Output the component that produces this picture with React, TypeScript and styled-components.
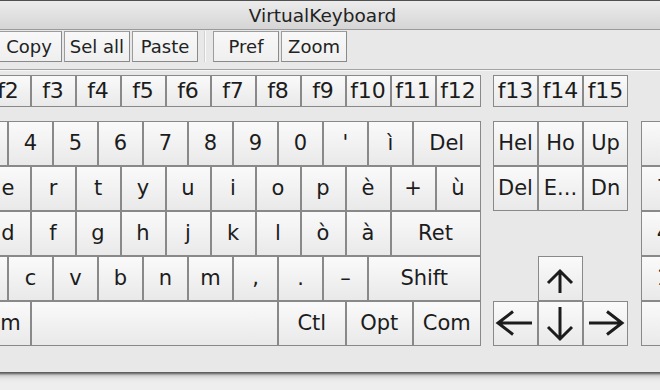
import React from 'react';
import styled, { createGlobalStyle, css } from 'styled-components';

const U = 45;

const Global = createGlobalStyle`
  html, body {
    margin: 0;
    padding: 0;
    overflow: hidden;
    background: #eeeeee;
  }
  body {
    width: 660px;
    height: 390px;
    font-family: 'DejaVu Sans', 'Liberation Sans', sans-serif;
  }
`;

const Window = styled.div`
  margin-left: -190px;
  width: 1025px;
  background: #e8e8e8;
  border-bottom: 1px solid #5e5e5e;
  box-shadow: 0 1px 2px rgba(0, 0, 0, 0.55), 0 3px 6px rgba(0, 0, 0, 0.22);
`;

const TitleBar = styled.div`
  height: 28px;
  border-top: 1px solid #505050;
  border-bottom: 1px solid #9a9a9a;
  background: linear-gradient(#ececec, #d5d5d5);
  display: flex;
  align-items: center;
  justify-content: center;
`;

const Title = styled.span`
  font-size: 18.5px;
  color: #222;
`;

const Toolbar = styled.div`
  height: 38px;
  padding: 1px 0 0 118px;
  display: flex;
  align-items: flex-start;
  gap: 2px;
`;

const ToolButton = styled.div`
  box-sizing: border-box;
  width: 66px;
  height: 31px;
  border: 1px solid #9c9c9c;
  border-right-color: #8a8a8a;
  border-bottom-color: #8a8a8a;
  background: linear-gradient(#f8f8f8, #efefef);
  display: flex;
  align-items: center;
  justify-content: center;
  font-size: 18px;
  color: #222;
  white-space: nowrap;
`;

const ToolSeparator = styled.div`
  width: 1px;
  height: 31px;
  margin: 0 5px;
  background: #fbfbfb;
  box-shadow: -1px 0 0 #d2d2d2;
`;

const Divider = styled.div`
  height: 1px;
  background: #a3a3a3;
  border-bottom: 1px solid #f6f6f6;
`;

const KeyboardArea = styled.div`
  display: flex;
  align-items: flex-start;
  padding: 4px 14px 26px 18px;
`;

const Section = styled.div<{ $gapAfter?: number }>`
  display: flex;
  flex-direction: column;
  gap: 14px;
  flex: none;
  margin-right: ${p => p.$gapAfter ?? 0}px;
`;

const FRow = styled.div<{ $indent?: number }>`
  display: flex;
  height: 32px;
  padding-left: ${p => p.$indent ?? 0}px;
`;

const Row = styled.div`
  display: flex;
  height: ${U}px;
`;

const capStyle = css`
  box-sizing: border-box;
  min-width: 0;
  overflow: hidden;
  border: 1px solid #898989;
  background: linear-gradient(#fafafa, #e9e9e9);
  display: flex;
  align-items: center;
  justify-content: center;
  font-size: 21px;
  line-height: 1;
  color: #1c1c1c;
  white-space: nowrap;
`;

const Key = styled.div<{ $w?: number }>`
  ${capStyle};
  flex: 0 0 ${p => (p.$w ?? 1) * U}px;
  height: 100%;
`;

const FKey = styled.div`
  ${capStyle};
  flex: 0 0 ${U}px;
  height: 32px;
  font-size: 22px;
`;

const Grid = styled.div<{ $cols: number }>`
  display: grid;
  grid-template-columns: repeat(${p => p.$cols}, ${U}px);
  grid-template-rows: repeat(5, ${U}px);
`;

const GridKey = styled.div<{ $r: number; $c: number; $rs?: number; $cs?: number }>`
  ${capStyle};
  grid-row: ${p => p.$r} / span ${p => p.$rs ?? 1};
  grid-column: ${p => p.$c} / span ${p => p.$cs ?? 1};
`;

const ArrowSvg = styled.svg`
  display: block;
  flex: none;
`;

type Dir = 'up' | 'down' | 'left' | 'right';

const arrowPaths: Record<Dir, string> = {
  up: 'M22 15 V37 M10 27 L22 15 L34 27',
  down: 'M22 6 V38 M10 26 L22 38 L34 26',
  left: 'M5 22 H39 M20 10.5 L5 22 L20 33.5',
  right: 'M6 22 H39 M24 10.5 L39 22 L24 33.5',
};

const Arrow = ({ dir }: { dir: Dir }) => (
  <ArrowSvg width="43" height="43" viewBox="1 1 43 43">
    <path
      d={arrowPaths[dir]}
      fill="none"
      stroke="#1c1c1c"
      strokeWidth="3"
      strokeLinejoin="miter"
    />
  </ArrowSvg>
);

type K = [string, number?];

const mainRows: K[][] = [
  [['\\'], ['1'], ['2'], ['3'], ['4'], ['5'], ['6'], ['7'], ['8'], ['9'], ['0'], ["'"], ['ì'], ['Del', 1.5]],
  [['Tab', 1.5], ['q'], ['w'], ['e'], ['r'], ['t'], ['y'], ['u'], ['i'], ['o'], ['p'], ['è'], ['+'], ['ù']],
  [['Lock', 1.5], ['a'], ['s'], ['d'], ['f'], ['g'], ['h'], ['j'], ['k'], ['l'], ['ò'], ['à'], ['Ret', 2]],
  [['Shift'], ['<'], ['z'], ['x'], ['c'], ['v'], ['b'], ['n'], ['m'], [','], ['.'], ['–'], ['Shift', 2.5]],
  [['Ctl', 1.5], ['Opt', 1.5], ['Com', 1.5], ['', 5.5], ['Ctl', 1.5], ['Opt', 1.5], ['Com', 1.5]],
];

const fKeys = ['f1', 'f2', 'f3', 'f4', 'f5', 'f6', 'f7', 'f8', 'f9', 'f10', 'f11', 'f12'];
const fKeysNav = ['f13', 'f14', 'f15'];

const navKeys: { l: string; r: number; c: number }[] = [
  { l: 'Hel', r: 1, c: 1 },
  { l: 'Ho', r: 1, c: 2 },
  { l: 'Up', r: 1, c: 3 },
  { l: 'Del', r: 2, c: 1 },
  { l: 'E...', r: 2, c: 2 },
  { l: 'Dn', r: 2, c: 3 },
];

const arrowKeys: { d: Dir; r: number; c: number }[] = [
  { d: 'up', r: 4, c: 2 },
  { d: 'left', r: 5, c: 1 },
  { d: 'down', r: 5, c: 2 },
  { d: 'right', r: 5, c: 3 },
];

const padKeys: { l: string; r: number; c: number; rs?: number; cs?: number }[] = [
  { l: '', r: 1, c: 1 },
  { l: '=', r: 1, c: 2 },
  { l: '/', r: 1, c: 3 },
  { l: '*', r: 1, c: 4 },
  { l: '7', r: 2, c: 1 },
  { l: '8', r: 2, c: 2 },
  { l: '9', r: 2, c: 3 },
  { l: '-', r: 2, c: 4 },
  { l: '4', r: 3, c: 1 },
  { l: '5', r: 3, c: 2 },
  { l: '6', r: 3, c: 3 },
  { l: '+', r: 3, c: 4 },
  { l: '1', r: 4, c: 1 },
  { l: '2', r: 4, c: 2 },
  { l: '3', r: 4, c: 3 },
  { l: 'Ent', r: 4, c: 4, rs: 2 },
  { l: '0', r: 5, c: 1, cs: 2 },
  { l: '.', r: 5, c: 3 },
];

export default function App() {
  return (
    <>
      <Global />
      <Window>
        <TitleBar>
          <Title>VirtualKeyboard</Title>
        </TitleBar>
        <Toolbar>
          <ToolButton>Cut</ToolButton>
          <ToolButton>Copy</ToolButton>
          <ToolButton>Sel all</ToolButton>
          <ToolButton>Paste</ToolButton>
          <ToolSeparator />
          <ToolButton>Pref</ToolButton>
          <ToolButton>Zoom</ToolButton>
        </Toolbar>
        <Divider />
        <KeyboardArea>
          <Section $gapAfter={12.5}>
            <FRow $indent={112.5}>
              {fKeys.map(f => (
                <FKey key={f}>{f}</FKey>
              ))}
            </FRow>
            <div>
              {mainRows.map((row, i) => (
                <Row key={i}>
                  {row.map(([l, w], j) => (
                    <Key key={j} $w={w}>
                      {l}
                    </Key>
                  ))}
                </Row>
              ))}
            </div>
          </Section>
          <Section $gapAfter={13}>
            <FRow>
              {fKeysNav.map(f => (
                <FKey key={f}>{f}</FKey>
              ))}
            </FRow>
            <Grid $cols={3}>
              {navKeys.map(k => (
                <GridKey key={k.l + k.r} $r={k.r} $c={k.c}>
                  {k.l}
                </GridKey>
              ))}
              {arrowKeys.map(k => (
                <GridKey key={k.d} $r={k.r} $c={k.c}>
                  <Arrow dir={k.d} />
                </GridKey>
              ))}
            </Grid>
          </Section>
          <Section>
            <FRow />
            <Grid $cols={4}>
              {padKeys.map(k => (
                <GridKey key={`${k.r}-${k.c}`} $r={k.r} $c={k.c} $rs={k.rs} $cs={k.cs}>
                  {k.l}
                </GridKey>
              ))}
            </Grid>
          </Section>
        </KeyboardArea>
      </Window>
    </>
  );
}
